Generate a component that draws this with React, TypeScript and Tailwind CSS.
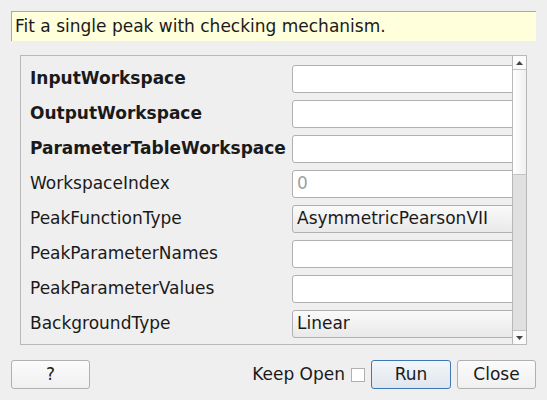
import React from "react";

const rows: { label: string; bold?: boolean; kind: "input" | "combo"; value?: string; placeholder?: string }[] = [
  { label: "InputWorkspace", bold: true, kind: "input" },
  { label: "OutputWorkspace", bold: true, kind: "input" },
  { label: "ParameterTableWorkspace", bold: true, kind: "input" },
  { label: "WorkspaceIndex", kind: "input", placeholder: "0" },
  { label: "PeakFunctionType", kind: "combo", value: "AsymmetricPearsonVII" },
  { label: "PeakParameterNames", kind: "input" },
  { label: "PeakParameterValues", kind: "input" },
  { label: "BackgroundType", kind: "combo", value: "Linear" },
];

export default function App() {
  return (
    <div
      className="w-[547px] h-[400px] bg-[#efefef] flex flex-col text-[17px] text-[#1a1a1a] overflow-hidden"
      style={{ fontFamily: '"DejaVu Sans", Verdana, sans-serif' }}
    >
      <div className="mt-[11px] ml-[11px] w-[525px] h-[30px] bg-[#ffffdc] border-t border-l border-[#a8a8a8] pl-[3px] flex items-center leading-none">
        Fit a single peak with checking mechanism.
      </div>

      <div className="mt-[14px] ml-[20px] w-[507px] h-[290px] border border-[#b8b8b8] flex">
        <div className="flex-1 overflow-hidden flex flex-col gap-[7px] pt-[9px] pl-[9px]">
          {rows.map((r) => (
            <div key={r.label} className="flex items-center h-[28px] shrink-0">
              <div className={`w-[262px] shrink-0 ${r.bold ? "font-bold" : ""}`}>{r.label}</div>
              {r.kind === "input" ? (
                <div className="w-[240px] h-[28px] shrink-0 bg-white border border-[#b0b0b0] rounded-[3px] flex items-center pl-[4px] text-[#a0a0a0]">
                  {r.placeholder ?? ""}
                </div>
              ) : (
                <div className="w-[240px] h-[28px] shrink-0 bg-gradient-to-b from-[#fafafa] to-[#e9e9e9] border border-[#b0b0b0] rounded-[3px] flex items-center pl-[4px]">
                  {r.value}
                </div>
              )}
            </div>
          ))}
        </div>
        <div className="w-[14px] shrink-0 border-l border-[#b8b8b8] flex flex-col bg-[#e0e0e0]">
          <div className="h-[14px] shrink-0 bg-[#fbfbfb] border-b border-[#c4c4c4] flex items-center justify-center">
            <svg width="7" height="4" viewBox="0 0 7 4">
              <polygon points="0,4 7,4 3.5,0" fill="#444" />
            </svg>
          </div>
          <div className="h-[105px] shrink-0 bg-gradient-to-r from-[#ffffff] to-[#f0f0f0] border-b border-[#c4c4c4]" />
          <div className="flex-1" />
          <div className="h-[14px] shrink-0 bg-[#fbfbfb] border-t border-[#c4c4c4] flex items-center justify-center">
            <svg width="7" height="4" viewBox="0 0 7 4">
              <polygon points="0,0 7,0 3.5,4" fill="#444" />
            </svg>
          </div>
        </div>
      </div>

      <div className="mt-[15px] mx-[11px] flex items-center h-[29px]">
        <button className="w-[79px] h-[29px] bg-gradient-to-b from-[#fbfbfb] to-[#f0f0f0] border border-[#b0b0b0] rounded-[3px] flex items-center justify-center">
          ?
        </button>
        <div className="flex-1" />
        <span>Keep Open</span>
        <div className="ml-[6px] w-[14px] h-[14px] bg-white border border-[#b0b0b0]" />
        <button className="ml-[6px] w-[80px] h-[29px] bg-gradient-to-b from-[#f3f6f9] to-[#dfe6ed] border border-[#3c78b4] rounded-[3px] flex items-center justify-center">
          Run
        </button>
        <button className="ml-[6px] w-[79px] h-[29px] bg-gradient-to-b from-[#fbfbfb] to-[#f0f0f0] border border-[#b0b0b0] rounded-[3px] flex items-center justify-center">
          Close
        </button>
      </div>
    </div>
  );
}
